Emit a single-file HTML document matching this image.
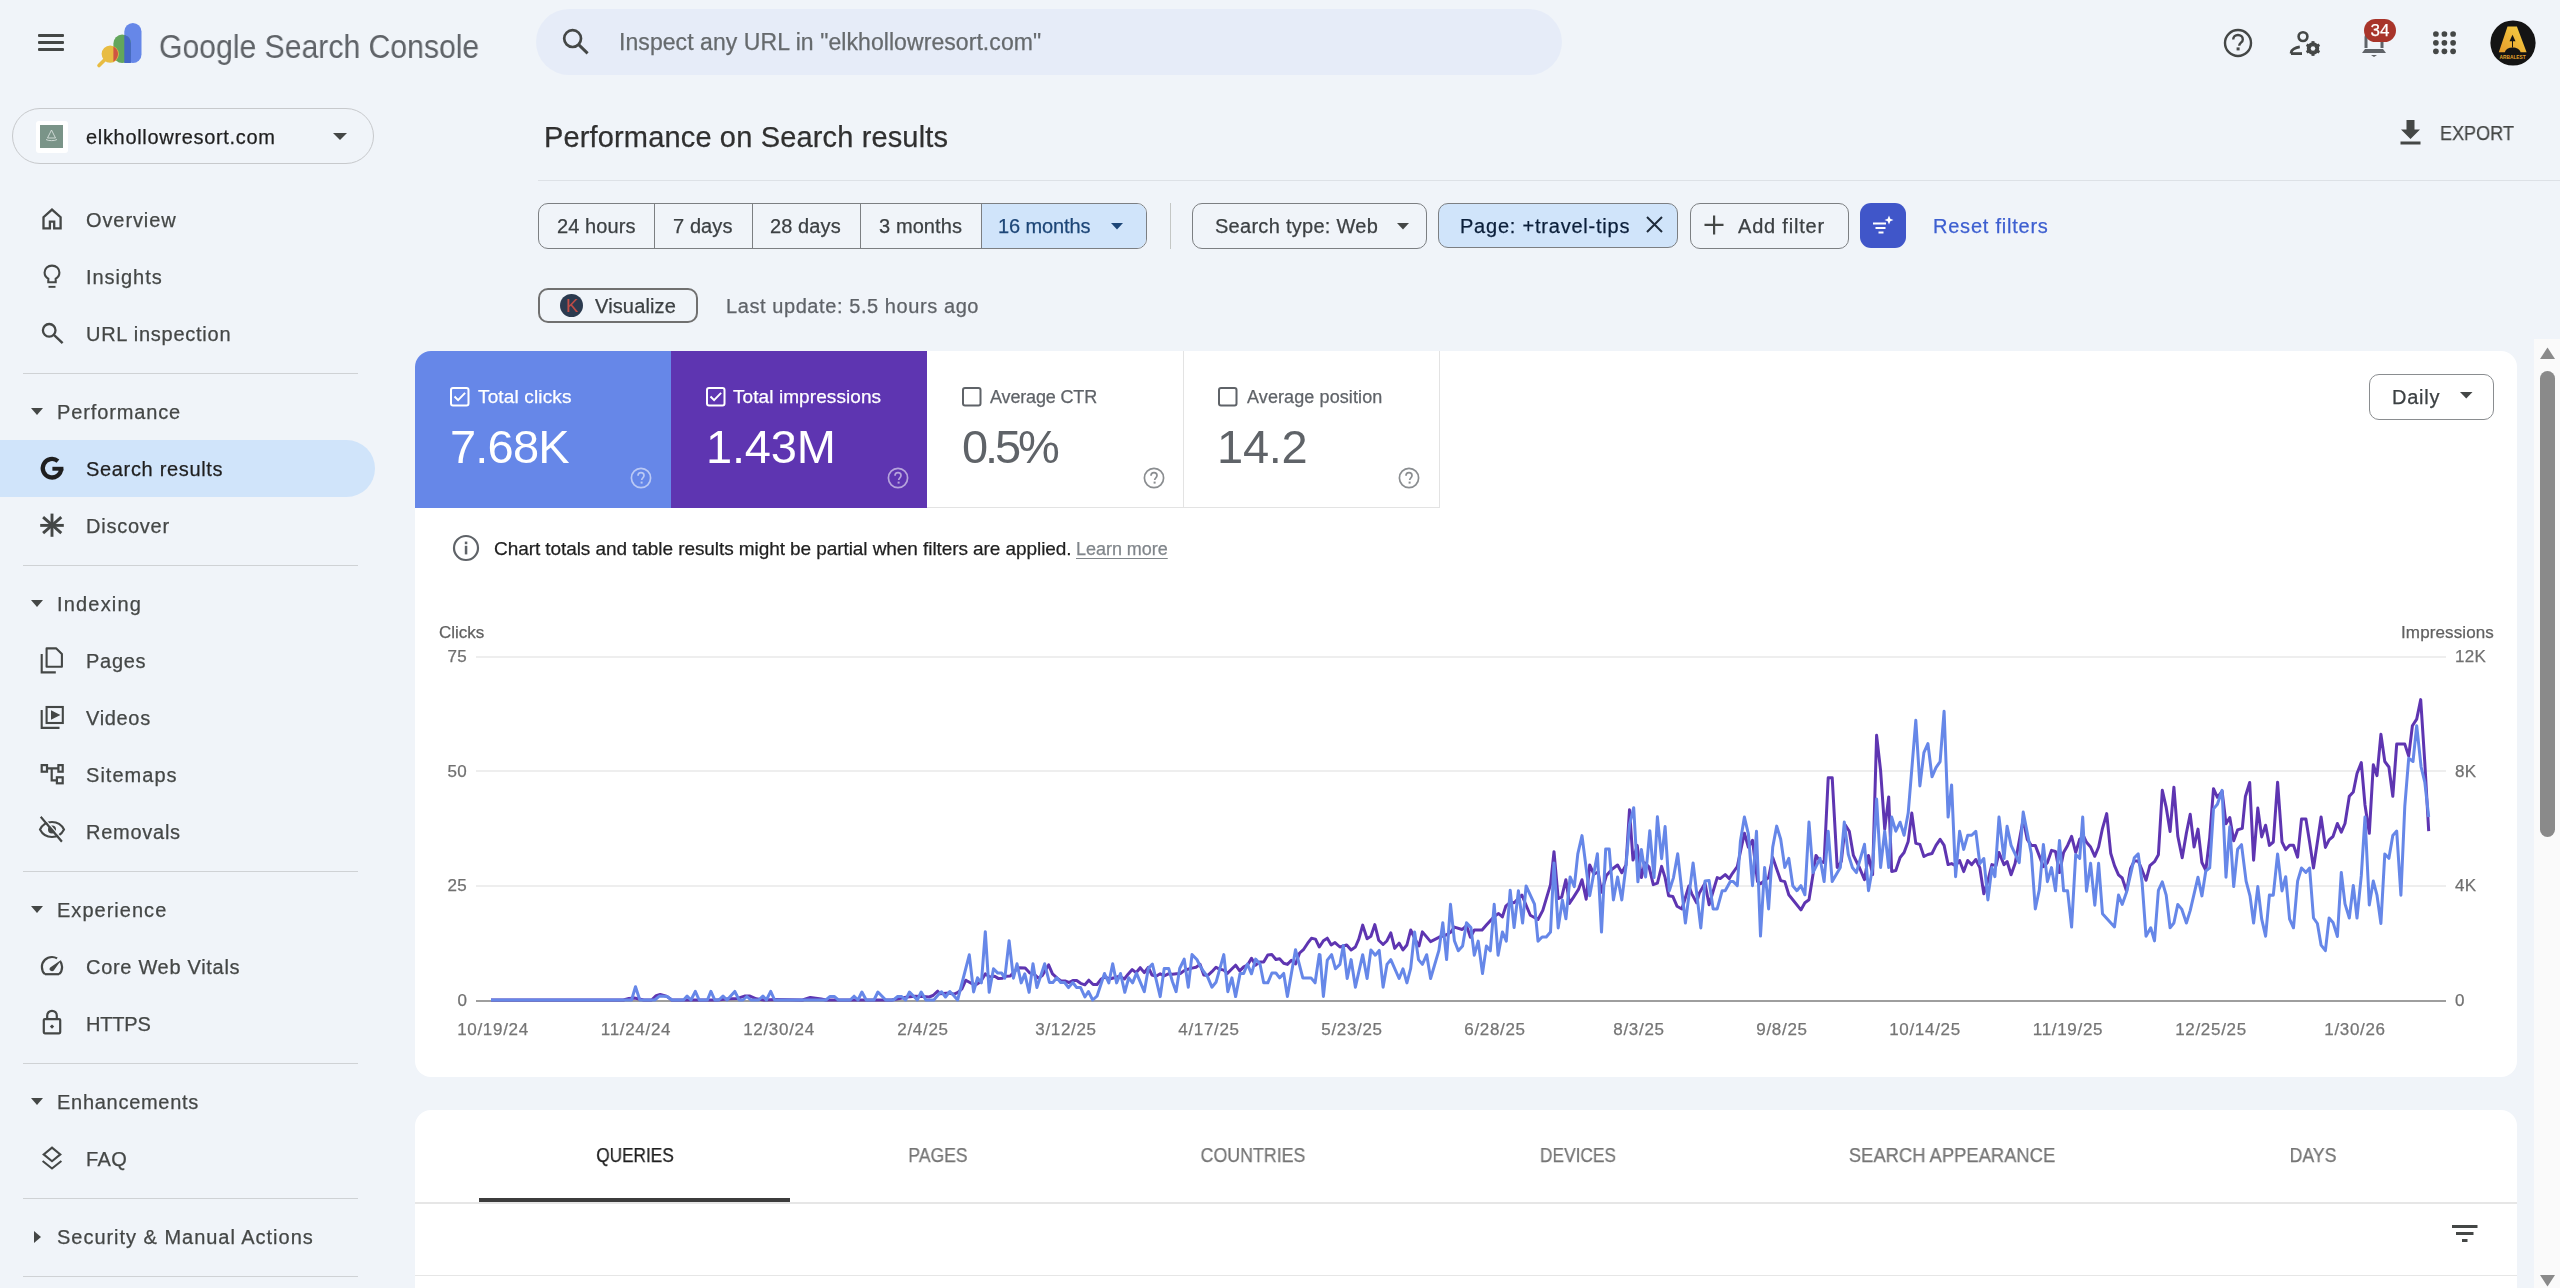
<!DOCTYPE html>
<html><head><meta charset="utf-8"><title>Performance on Search results</title>
<style>
html,body{margin:0;padding:0;}
body{width:2560px;height:1288px;overflow:hidden;position:relative;background:#f0f4f9;font-family:"Liberation Sans",sans-serif;}
.t{position:absolute;white-space:nowrap;line-height:1;-webkit-font-smoothing:antialiased;will-change:transform;-webkit-text-stroke:0.25px currentColor;}
svg{display:block}
</style></head><body>
<div style="position:absolute;left:38px;top:34px;width:26px;height:3px;background:#444746;border-radius:1px"></div>
<div style="position:absolute;left:38px;top:41px;width:26px;height:3px;background:#444746;border-radius:1px"></div>
<div style="position:absolute;left:38px;top:48px;width:26px;height:3px;background:#444746;border-radius:1px"></div>
<svg style="position:absolute;left:95px;top:20px;" width="50" height="50" viewBox="0 0 50 50">
<rect x="29.3" y="2.9" width="17.2" height="40.1" rx="8.6" fill="#6687e8"/>
<rect x="18.4" y="14.6" width="17.6" height="28.4" rx="8.8" fill="#63a65c"/>
<path d="M29.3 14.9 A8.8 8.8 0 0 1 35.9 23.4 V43 H29.3 Z" fill="#4466c8"/>
<circle cx="15.2" cy="34.1" r="8.6" fill="#e8bc42"/>
<path d="M18.4 26.5 A8.6 8.6 0 0 1 18.4 41.7 Z" fill="#cf5442"/>
<line x1="4" y1="45.5" x2="10" y2="39.5" stroke="#e8bc42" stroke-width="3.6" stroke-linecap="round"/>
</svg>
<div class="t" style="left:159px;top:28.7px;font-size:34px;color:#5f6368;letter-spacing:0px;font-weight:400;transform:scaleX(0.8870);transform-origin:0 0;-webkit-text-stroke:0;">Google Search Console</div>
<div style="position:absolute;left:536px;top:9px;width:1026px;height:66px;background:#e6ecf8;border-radius:33px"></div>
<svg style="position:absolute;left:560px;top:27px;" width="30" height="30" viewBox="0 0 30 30"><circle cx="12.6" cy="11.6" r="8.4" fill="none" stroke="#444746" stroke-width="2.7"/><line x1="18.4" y1="17.4" x2="27.6" y2="26.4" stroke="#444746" stroke-width="2.9"/></svg>
<div class="t" style="left:618.5px;top:31.3px;font-size:23px;color:#666a6d;letter-spacing:0.07px;font-weight:400;">Inspect any URL in "elkhollowresort.com"</div>
<svg style="position:absolute;left:2222px;top:27px;" width="32" height="32" viewBox="0 0 32 32"><circle cx="16" cy="16" r="13" fill="none" stroke="#444746" stroke-width="2.4"/><path d="M11.2 12.6c0-2.8 2.1-4.6 4.8-4.6s4.8 1.8 4.8 4.4c0 3.3-3.6 3.3-3.6 6.4" fill="none" stroke="#444746" stroke-width="2.4"/><rect x="14.6" y="20.4" width="3" height="3" fill="#444746"/></svg>
<svg style="position:absolute;left:2288px;top:27px;" width="36" height="34" viewBox="0 0 36 34"><circle cx="15" cy="9.6" r="4.4" fill="none" stroke="#444746" stroke-width="2.6"/><path d="M3.2 26.6v-1.2c0-2.6 4.2-5 8.6-5.6" fill="none" stroke="#444746" stroke-width="2.8"/><line x1="3" y1="26.6" x2="14" y2="26.6" stroke="#444746" stroke-width="2.8"/><g transform="translate(25,21.5)"><circle r="4.6" fill="none" stroke="#444746" stroke-width="3.2"/><g stroke="#444746" stroke-width="3"><line x1="0" y1="-7.4" x2="0" y2="7.4"/><line x1="-6.4" y1="-3.7" x2="6.4" y2="3.7"/><line x1="-6.4" y1="3.7" x2="6.4" y2="-3.7"/></g><circle r="2.2" fill="#f0f4f9"/></g></svg>
<svg style="position:absolute;left:2358px;top:22px;" width="32" height="38" viewBox="0 0 32 38"><path d="M8 26V15c0-4.6 3.5-8 8-8s8 3.4 8 8v11" fill="none" stroke="#5f6368" stroke-width="3"/><path d="M4 31h24l-3-4H7z" fill="#5f6368"/><path d="M13 33h6l-3 2z" fill="#5f6368"/></svg>
<div style="position:absolute;left:2364px;top:18.5px;width:32px;height:23.5px;background:#a8342a;border-radius:12px"></div>
<div class="t" style="left:2360.0px;width:40px;text-align:center;top:22.1px;font-size:17px;color:#ffffff;letter-spacing:0px;font-weight:400;">34</div>
<svg style="position:absolute;left:2430px;top:28px;" width="30" height="30" viewBox="0 0 30 30"><circle cx="5.9" cy="6" r="2.85" fill="#444746"/><circle cx="5.9" cy="14.8" r="2.85" fill="#444746"/><circle cx="5.9" cy="23.3" r="2.85" fill="#444746"/><circle cx="14.4" cy="6" r="2.85" fill="#444746"/><circle cx="14.4" cy="14.8" r="2.85" fill="#444746"/><circle cx="14.4" cy="23.3" r="2.85" fill="#444746"/><circle cx="23.1" cy="6" r="2.85" fill="#444746"/><circle cx="23.1" cy="14.8" r="2.85" fill="#444746"/><circle cx="23.1" cy="23.3" r="2.85" fill="#444746"/></svg>
<svg style="position:absolute;left:2490px;top:20px;" width="46" height="46" viewBox="0 0 46 46"><circle cx="23" cy="23" r="22.6" fill="#141414"/>
<defs><linearGradient id="ag" x1="0" y1="1" x2="1" y2="0"><stop offset="0" stop-color="#e59a2a"/><stop offset="1" stop-color="#f6d245"/></linearGradient></defs>
<path d="M17.5 6.6h9.4l9.7 25.6h-6c-0.8-3-3.8-4.8-8-4.8s-7 1.8-7.8 4.8H8.8z" fill="url(#ag)"/>
<path d="M22.5 14.8l-3 6.5h6z" fill="#141414"/><rect x="22" y="20" width="1" height="7.5" fill="#141414"/>
<text x="22.6" y="39.2" font-family="Liberation Sans" font-weight="700" font-size="5.6" fill="#e6a52c" text-anchor="middle" textLength="26" lengthAdjust="spacingAndGlyphs">ARBALEST</text></svg>
<div style="position:absolute;left:12px;top:108px;width:362px;height:56px;border:1px solid #c7c9cc;border-radius:29px;box-sizing:border-box"></div>
<div style="position:absolute;left:35.5px;top:120.5px;width:32px;height:32px;background:#fff;border-radius:3px"></div>
<div style="position:absolute;left:40px;top:125px;width:23px;height:23px;background:#7a9488"></div>
<svg style="position:absolute;left:40px;top:125px;" width="23" height="23" viewBox="0 0 23 23"><path d="M11.5 5l-4 8h8z" fill="none" stroke="#d7e0dc" stroke-width="0.9"/><path d="M6 14.5c2 1.5 9 1.5 11 0" fill="none" stroke="#d7e0dc" stroke-width="0.9"/></svg>
<div class="t" style="left:85.5px;top:127.1px;font-size:20px;color:#1f1f1f;letter-spacing:0.68px;font-weight:400;">elkhollowresort.com</div>
<svg style="position:absolute;left:333px;top:133px;" width="15" height="8" viewBox="0 0 15 8"><path d="M0 0h14l-7 7z" fill="#444746"/></svg>
<div style="position:absolute;left:0px;top:440px;width:375px;height:57px;background:#d0e4fa;border-radius:0 28.5px 28.5px 0"></div>
<svg style="position:absolute;left:39.5px;top:203.2px;overflow:visible" width="24" height="30" viewBox="0 -3 24 30"><path d="M3.5 22.4V11.2L12 3.6l8.6 7.6v11.2H14.2V15.6H9.9v6.8z" fill="none" stroke="#444746" stroke-width="2.3" stroke-linejoin="miter"/></svg>
<div class="t" style="left:85.5px;top:209.8px;font-size:20px;color:#444746;letter-spacing:0.907px;font-weight:400;">Overview</div>
<svg style="position:absolute;left:39.5px;top:260.2px;overflow:visible" width="24" height="30" viewBox="0 -3 24 30"><path d="M8.3 19.3v-3.6C5.9 14.5 4.6 12.3 4.6 9.6 4.6 5.5 7.9 2.6 12 2.6s7.4 2.9 7.4 7c0 2.7-1.3 4.9-3.7 6.1v3.6z" fill="none" stroke="#444746" stroke-width="2.1"/><rect x="8.5" y="22.9" width="7" height="1.9" fill="#444746"/></svg>
<div class="t" style="left:85.5px;top:266.8px;font-size:20px;color:#444746;letter-spacing:0.964px;font-weight:400;">Insights</div>
<svg style="position:absolute;left:39.5px;top:317.0px;overflow:visible" width="24" height="30" viewBox="0 -3 24 30"><circle cx="9.2" cy="10.3" r="6.3" fill="none" stroke="#444746" stroke-width="2.3"/><line x1="13.6" y1="14.7" x2="22.6" y2="23.2" stroke="#444746" stroke-width="2.4"/></svg>
<div class="t" style="left:85.5px;top:323.6px;font-size:20px;color:#444746;letter-spacing:0.742px;font-weight:400;">URL inspection</div>
<div style="position:absolute;left:23px;top:373.2px;width:335px;height:1.3px;background:#cfd2d5"></div>
<svg style="position:absolute;left:31px;top:408.3px;" width="12" height="7" viewBox="0 0 12 7"><path d="M0 0h12l-6 7z" fill="#444746"/></svg>
<div class="t" style="left:57px;top:401.9px;font-size:20px;color:#444746;letter-spacing:0.87px;font-weight:400;">Performance</div>
<svg style="position:absolute;left:39.5px;top:452.0px;overflow:visible" width="24" height="30" viewBox="0 -3 24 30"><path d="M17.95 6.1A9.25 9.25 0 1 0 21.25 13.7" fill="none" stroke="#1f1f1f" stroke-width="4.3"/><rect x="12.4" y="11.8" width="11" height="3.9" fill="#1f1f1f"/></svg>
<div class="t" style="left:85.5px;top:458.6px;font-size:20px;color:#1f1f1f;letter-spacing:0.673px;font-weight:400;">Search results</div>
<svg style="position:absolute;left:39.5px;top:509.0px;overflow:visible" width="24" height="30" viewBox="0 -3 24 30"><g stroke="#444746" stroke-width="2.9"><line x1="12" y1="1.6" x2="12" y2="24.8"/><line x1="0.2" y1="13.4" x2="23.8" y2="13.4"/><line x1="3.1" y1="5.1" x2="21.3" y2="21.2"/><line x1="21.3" y1="5.1" x2="3.1" y2="21.2"/></g></svg>
<div class="t" style="left:85.5px;top:515.6px;font-size:20px;color:#444746;letter-spacing:0.764px;font-weight:400;">Discover</div>
<div style="position:absolute;left:23px;top:565.2px;width:335px;height:1.3px;background:#cfd2d5"></div>
<svg style="position:absolute;left:31px;top:600.0px;" width="12" height="7" viewBox="0 0 12 7"><path d="M0 0h12l-6 7z" fill="#444746"/></svg>
<div class="t" style="left:57px;top:593.6px;font-size:20px;color:#444746;letter-spacing:1.186px;font-weight:400;">Indexing</div>
<svg style="position:absolute;left:39.5px;top:644.0px;overflow:visible" width="24" height="30" viewBox="0 -3 24 30"><path d="M1.7 6.9V25.4H15.8" fill="none" stroke="#444746" stroke-width="2.1"/><path d="M6.6 1.4H16.3L21.9 7V19.7H6.6z" fill="none" stroke="#444746" stroke-width="2.1" stroke-linejoin="round"/></svg>
<div class="t" style="left:85.5px;top:650.6px;font-size:20px;color:#444746;letter-spacing:0.725px;font-weight:400;">Pages</div>
<svg style="position:absolute;left:39.5px;top:701.0px;overflow:visible" width="24" height="30" viewBox="0 -3 24 30"><path d="M1.7 6V23.9H19.5" fill="none" stroke="#444746" stroke-width="2.1"/><rect x="6.6" y="3" width="16.2" height="16" fill="none" stroke="#444746" stroke-width="2.1"/><path d="M11 6.2L20.4 11 11 15.8z" fill="#444746"/></svg>
<div class="t" style="left:85.5px;top:707.6px;font-size:20px;color:#444746;letter-spacing:0.67px;font-weight:400;">Videos</div>
<svg style="position:absolute;left:39.5px;top:758.0px;overflow:visible" width="24" height="30" viewBox="0 -3 24 30"><g fill="none" stroke="#444746" stroke-width="2.2"><rect x="1.7" y="4.1" width="5.3" height="6.6"/><rect x="18.4" y="4.1" width="4.3" height="6.6"/><rect x="16.9" y="16.3" width="5.8" height="6"/><path d="M7 7.4h11.4M11.7 7.4v11.9h5.2"/></g></svg>
<div class="t" style="left:85.5px;top:764.6px;font-size:20px;color:#444746;letter-spacing:1.036px;font-weight:400;">Sitemaps</div>
<svg style="position:absolute;left:39.5px;top:815.0px;overflow:visible" width="24" height="30" viewBox="0 -3 24 30"><path d="M0 11.5C2.4 6.8 6.8 4 12 4s9.6 2.8 12 7.5c-2.4 4.7-6.8 7.5-12 7.5S2.4 16.2 0 11.5z" fill="none" stroke="#444746" stroke-width="2.1"/><circle cx="12" cy="11.5" r="4" fill="#444746"/><line x1="0.8" y1="-1.2" x2="22" y2="23.6" stroke="#444746" stroke-width="2.4"/><line x1="2.3" y1="-2.2" x2="23.5" y2="22.6" stroke="#f0f4f9" stroke-width="1.2"/></svg>
<div class="t" style="left:85.5px;top:821.6px;font-size:20px;color:#444746;letter-spacing:0.736px;font-weight:400;">Removals</div>
<div style="position:absolute;left:23px;top:871.2px;width:335px;height:1.3px;background:#cfd2d5"></div>
<svg style="position:absolute;left:31px;top:906.0px;" width="12" height="7" viewBox="0 0 12 7"><path d="M0 0h12l-6 7z" fill="#444746"/></svg>
<div class="t" style="left:57px;top:899.6px;font-size:20px;color:#444746;letter-spacing:1.022px;font-weight:400;">Experience</div>
<svg style="position:absolute;left:39.5px;top:950.0px;overflow:visible" width="24" height="30" viewBox="0 -3 24 30"><path d="M5 21.2C2.9 19.3 1.9 16.8 1.9 13.9 1.9 8.4 6.4 4 12 4c1.9 0 3.6.5 5.1 1.4M20.1 8.2c1.3 1.6 2 3.6 2 5.7 0 2.9-1 5.4-3.1 7.3" fill="none" stroke="#444746" stroke-width="2.2"/><path d="M10.3 17.6c-1-.9-1-2.3-.1-3.2l11.2-7.6-7.6 10.8c-.9.9-2.5.9-3.5 0z" fill="#444746"/><line x1="5" y1="21.2" x2="19" y2="21.2" stroke="#444746" stroke-width="2.2"/></svg>
<div class="t" style="left:85.5px;top:956.6px;font-size:20px;color:#444746;letter-spacing:0.7px;font-weight:400;">Core Web Vitals</div>
<svg style="position:absolute;left:39.5px;top:1007.0px;overflow:visible" width="24" height="30" viewBox="0 -3 24 30"><path d="M7.2 8.4V5.6C7.2 2.8 9.3.8 12 .8s4.8 2 4.8 4.8v2.8" fill="none" stroke="#444746" stroke-width="2.2"/><rect x="3.8" y="9.1" width="16.4" height="14.2" rx="1" fill="none" stroke="#444746" stroke-width="2.2"/><path d="M12 14.4l2.2 2.2L12 18.8 9.8 16.6z" fill="#444746"/></svg>
<div class="t" style="left:85.5px;top:1013.6px;font-size:20px;color:#444746;letter-spacing:-0.2px;font-weight:400;">HTTPS</div>
<div style="position:absolute;left:23px;top:1063.2px;width:335px;height:1.3px;background:#cfd2d5"></div>
<svg style="position:absolute;left:31px;top:1098.0px;" width="12" height="7" viewBox="0 0 12 7"><path d="M0 0h12l-6 7z" fill="#444746"/></svg>
<div class="t" style="left:57px;top:1091.6px;font-size:20px;color:#444746;letter-spacing:0.718px;font-weight:400;">Enhancements</div>
<svg style="position:absolute;left:39.5px;top:1142.0px;overflow:visible" width="24" height="30" viewBox="0 -3 24 30"><path d="M12 2.6l8.3 6.8L12 16.2 3.7 9.4z" fill="none" stroke="#444746" stroke-width="2.1" stroke-linejoin="miter"/><path d="M2.6 16l9.4 7.5 9.4-7.5" fill="none" stroke="#444746" stroke-width="2.1"/></svg>
<div class="t" style="left:85.5px;top:1148.6px;font-size:20px;color:#444746;letter-spacing:0.4px;font-weight:400;">FAQ</div>
<div style="position:absolute;left:23px;top:1198.2px;width:335px;height:1.3px;background:#cfd2d5"></div>
<svg style="position:absolute;left:34px;top:1230.5px;" width="7" height="12" viewBox="0 0 7 12"><path d="M0 0v12l7-6z" fill="#444746"/></svg>
<div class="t" style="left:57px;top:1226.6px;font-size:20px;color:#444746;letter-spacing:0.975px;font-weight:400;">Security &amp; Manual Actions</div>
<div style="position:absolute;left:23px;top:1276.2px;width:335px;height:1.3px;background:#cfd2d5"></div>
<div class="t" style="left:544px;top:122.5px;font-size:29px;color:#303030;letter-spacing:0.15px;font-weight:400;">Performance on Search results</div>
<div style="position:absolute;left:538px;top:179.5px;width:2022px;height:1.5px;background:#dde1e6"></div>
<svg style="position:absolute;left:2400px;top:120px;" width="21" height="25" viewBox="0 0 21 25"><path d="M6.5 0h8v9.5h5.5L10.5 19 1 9.5h5.5z" fill="#444746"/><rect x="0.5" y="21.5" width="20" height="3" fill="#444746"/></svg>
<div class="t" style="left:2440px;top:123.2px;font-size:20.5px;color:#444746;letter-spacing:0px;font-weight:400;transform:scaleX(0.8800);transform-origin:0 0;">EXPORT</div>
<div style="position:absolute;left:538px;top:203px;width:609px;height:46px;border:1px solid #7c7f82;border-radius:10px;box-sizing:border-box;overflow:hidden"></div>
<div style="position:absolute;left:982px;top:204px;width:164px;height:44px;background:#d0e4fa;border-radius:0 9px 9px 0"></div>
<div style="position:absolute;left:654.0px;top:204px;width:1px;height:44px;background:#7c7f82"></div>
<div style="position:absolute;left:751.5px;top:204px;width:1px;height:44px;background:#7c7f82"></div>
<div style="position:absolute;left:859.5px;top:204px;width:1px;height:44px;background:#7c7f82"></div>
<div style="position:absolute;left:981.0px;top:204px;width:1px;height:44px;background:#7c7f82"></div>
<div class="t" style="left:556.5px;top:215.9px;font-size:20px;color:#3c4043;letter-spacing:0.1px;font-weight:400;">24 hours</div>
<div class="t" style="left:672.5px;top:215.9px;font-size:20px;color:#3c4043;letter-spacing:0.1px;font-weight:400;">7 days</div>
<div class="t" style="left:770px;top:215.9px;font-size:20px;color:#3c4043;letter-spacing:0.1px;font-weight:400;">28 days</div>
<div class="t" style="left:878.5px;top:215.9px;font-size:20px;color:#3c4043;letter-spacing:0.1px;font-weight:400;">3 months</div>
<div class="t" style="left:998px;top:215.9px;font-size:20px;color:#1d4677;letter-spacing:-0.1px;font-weight:400;">16 months</div>
<svg style="position:absolute;left:1111px;top:223px;" width="12" height="7" viewBox="0 0 12 7"><path d="M0 0h12l-6 6.5z" fill="#1d4677"/></svg>
<div style="position:absolute;left:1169.5px;top:203px;width:1.5px;height:46px;background:#c4c7c5"></div>
<div style="position:absolute;left:1192px;top:203px;width:235px;height:46px;border:1px solid #7c7f82;border-radius:10px;box-sizing:border-box"></div>
<div class="t" style="left:1214.5px;top:215.9px;font-size:20px;color:#3c4043;letter-spacing:0.28px;font-weight:400;">Search type: Web</div>
<svg style="position:absolute;left:1397px;top:222.5px;" width="12" height="7" viewBox="0 0 12 7"><path d="M0 0h12l-6 6.5z" fill="#444746"/></svg>
<div style="position:absolute;left:1438px;top:203px;width:240px;height:45px;background:#d0e4fa;border:1px solid #7c7f82;border-radius:10px;box-sizing:border-box"></div>
<div class="t" style="left:1459.5px;top:215.9px;font-size:20px;color:#0b1f3a;letter-spacing:0.78px;font-weight:400;">Page: +travel-tips</div>
<svg style="position:absolute;left:1646px;top:216px;" width="17" height="17" viewBox="0 0 17 17"><path d="M1 1L16 16M16 1L1 16" stroke="#1f2b3a" stroke-width="2"/></svg>
<div style="position:absolute;left:1690px;top:203px;width:159px;height:46px;border:1px solid #7c7f82;border-radius:10px;box-sizing:border-box"></div>
<svg style="position:absolute;left:1704px;top:215px;" width="20" height="20" viewBox="0 0 20 20"><path d="M9 0.5h2.2v8.3h8.3V11h-8.3v8.5H9V11H0.5V8.8H9z" fill="#444746"/></svg>
<div class="t" style="left:1738px;top:215.9px;font-size:20px;color:#3c4043;letter-spacing:0.8px;font-weight:400;">Add filter</div>
<div style="position:absolute;left:1860px;top:203px;width:45.5px;height:45px;background:#4056c9;border-radius:11px"></div>
<svg style="position:absolute;left:1872px;top:214px;" width="24" height="22" viewBox="0 0 24 22"><rect x="1" y="8.5" width="13" height="2" fill="#fff"/><rect x="3.5" y="13" width="10" height="2" fill="#fff"/><rect x="6.5" y="17.5" width="5" height="2" fill="#fff"/><path d="M17 1.5l1.3 3.2 3.2 1.3-3.2 1.3L17 10.5l-1.3-3.2-3.2-1.3 3.2-1.3z" fill="#fff"/></svg>
<div class="t" style="left:1932.8px;top:215.9px;font-size:20px;color:#3d5fd0;letter-spacing:0.77px;font-weight:400;">Reset filters</div>
<div style="position:absolute;left:538px;top:287.5px;width:159.5px;height:35.5px;border:2px solid #707070;border-radius:10px;box-sizing:border-box"></div>
<div style="position:absolute;left:559.5px;top:294px;width:23px;height:23px;background:#2b3a4f;border-radius:50%"></div>
<div class="t" style="left:565.5px;top:297.1px;font-size:18.5px;color:#bf4d47;letter-spacing:0px;font-weight:400;-webkit-text-stroke:0.1px currentColor;">K</div>
<div class="t" style="left:594.5px;top:295.9px;font-size:20px;color:#3c4043;letter-spacing:0.15px;font-weight:400;">Visualize</div>
<div class="t" style="left:725.5px;top:295.9px;font-size:20px;color:#5f6368;letter-spacing:0.58px;font-weight:400;">Last update: 5.5 hours ago</div>
<div style="position:absolute;left:415px;top:351px;width:2102px;height:725.5px;background:#fff;border-radius:16px"></div>
<div style="position:absolute;left:415px;top:351px;width:256.2px;height:157px;background:#6687e8;border-radius:16px 0 0 0"></div>
<div style="position:absolute;left:671.2px;top:351px;width:256px;height:157px;background:#5e35b1"></div>
<div style="position:absolute;left:927.2px;top:507px;width:512px;height:1px;background:#e3e3e3"></div>
<div style="position:absolute;left:1182.5px;top:351px;width:1px;height:157px;background:#e3e3e3"></div>
<div style="position:absolute;left:1439px;top:351px;width:1px;height:157px;background:#e3e3e3"></div>
<svg style="position:absolute;left:450px;top:386.5px;" width="20" height="20" viewBox="0 0 20 20"><rect x="1" y="1" width="17.5" height="17.5" rx="2" fill="none" stroke="#fff" stroke-width="2"/><path d="M4.5 9.5l3.6 3.6 7-7.2" fill="none" stroke="#fff" stroke-width="2"/></svg>
<div class="t" style="left:477.5px;top:386.8px;font-size:19px;color:#fff;letter-spacing:0.15px;font-weight:400;">Total clicks</div>
<div class="t" style="left:449.5px;top:423.4px;font-size:47px;color:#fff;letter-spacing:-0.8px;font-weight:400;-webkit-text-stroke:0;">7.68K</div>
<svg style="position:absolute;left:630.4px;top:466.6px;" width="22" height="22" viewBox="0 0 22 22"><circle cx="11" cy="11" r="9.6" fill="none" stroke="rgba(255,255,255,0.55)" stroke-width="1.7"/><path d="M8 8.8c0-1.9 1.4-3.1 3-3.1s3 1.2 3 2.9c0 2.2-2.3 2.2-2.3 4.4" fill="none" stroke="rgba(255,255,255,0.55)" stroke-width="1.7"/><rect x="10.6" y="14.6" width="2" height="2" fill="rgba(255,255,255,0.55)"/></svg>
<svg style="position:absolute;left:706px;top:386.5px;" width="20" height="20" viewBox="0 0 20 20"><rect x="1" y="1" width="17.5" height="17.5" rx="2" fill="none" stroke="#fff" stroke-width="2"/><path d="M4.5 9.5l3.6 3.6 7-7.2" fill="none" stroke="#fff" stroke-width="2"/></svg>
<div class="t" style="left:733px;top:386.8px;font-size:19px;color:#fff;letter-spacing:0.08px;font-weight:400;">Total impressions</div>
<div class="t" style="left:705.5px;top:423.4px;font-size:47px;color:#fff;letter-spacing:-0.2px;font-weight:400;-webkit-text-stroke:0;">1.43M</div>
<svg style="position:absolute;left:886.7px;top:466.6px;" width="22" height="22" viewBox="0 0 22 22"><circle cx="11" cy="11" r="9.6" fill="none" stroke="rgba(255,255,255,0.55)" stroke-width="1.7"/><path d="M8 8.8c0-1.9 1.4-3.1 3-3.1s3 1.2 3 2.9c0 2.2-2.3 2.2-2.3 4.4" fill="none" stroke="rgba(255,255,255,0.55)" stroke-width="1.7"/><rect x="10.6" y="14.6" width="2" height="2" fill="rgba(255,255,255,0.55)"/></svg>
<svg style="position:absolute;left:961.5px;top:386.5px;" width="20" height="20" viewBox="0 0 20 20"><rect x="1" y="1" width="17.5" height="17.5" rx="2" fill="none" stroke="#5f6368" stroke-width="2"/></svg>
<div class="t" style="left:989.5px;top:387.7px;font-size:18px;color:#5f6368;letter-spacing:-0.15px;font-weight:400;">Average CTR</div>
<div class="t" style="left:962px;top:423.4px;font-size:47px;color:#5f6368;letter-spacing:-3.1px;font-weight:400;-webkit-text-stroke:0;">0.5%</div>
<svg style="position:absolute;left:1142.6px;top:466.6px;" width="22" height="22" viewBox="0 0 22 22"><circle cx="11" cy="11" r="9.6" fill="none" stroke="#8a8d90" stroke-width="1.7"/><path d="M8 8.8c0-1.9 1.4-3.1 3-3.1s3 1.2 3 2.9c0 2.2-2.3 2.2-2.3 4.4" fill="none" stroke="#8a8d90" stroke-width="1.7"/><rect x="10.6" y="14.6" width="2" height="2" fill="#8a8d90"/></svg>
<svg style="position:absolute;left:1218px;top:386.5px;" width="20" height="20" viewBox="0 0 20 20"><rect x="1" y="1" width="17.5" height="17.5" rx="2" fill="none" stroke="#5f6368" stroke-width="2"/></svg>
<div class="t" style="left:1246.5px;top:387.7px;font-size:18px;color:#5f6368;letter-spacing:0.1px;font-weight:400;">Average position</div>
<div class="t" style="left:1216.5px;top:423.4px;font-size:47px;color:#5f6368;letter-spacing:-0.25px;font-weight:400;-webkit-text-stroke:0;">14.2</div>
<svg style="position:absolute;left:1398px;top:466.6px;" width="22" height="22" viewBox="0 0 22 22"><circle cx="11" cy="11" r="9.6" fill="none" stroke="#8a8d90" stroke-width="1.7"/><path d="M8 8.8c0-1.9 1.4-3.1 3-3.1s3 1.2 3 2.9c0 2.2-2.3 2.2-2.3 4.4" fill="none" stroke="#8a8d90" stroke-width="1.7"/><rect x="10.6" y="14.6" width="2" height="2" fill="#8a8d90"/></svg>
<div style="position:absolute;left:2369px;top:373.5px;width:125px;height:46px;border:1px solid #8a8d90;border-radius:10px;box-sizing:border-box"></div>
<div class="t" style="left:2391.5px;top:386.6px;font-size:20px;color:#3c4043;letter-spacing:0.75px;font-weight:400;">Daily</div>
<svg style="position:absolute;left:2460px;top:392px;" width="13" height="7" viewBox="0 0 13 7"><path d="M0 0h12.5l-6.25 6.5z" fill="#444746"/></svg>
<svg style="position:absolute;left:452px;top:534px;" width="28" height="28" viewBox="0 0 28 28"><circle cx="14" cy="14" r="12" fill="none" stroke="#5f6368" stroke-width="2.2"/><rect x="12.8" y="7.6" width="2.5" height="2.6" fill="#5f6368"/><rect x="12.8" y="11.8" width="2.5" height="8.6" fill="#5f6368"/></svg>
<div class="t" style="left:493.5px;top:539.2px;font-size:19px;color:#1f1f1f;letter-spacing:-0.075px;font-weight:400;">Chart totals and table results might be partial when filters are applied.</div>
<div class="t" style="left:1076.3px;top:540.1px;font-size:18px;color:#80868b;letter-spacing:-0.03px;font-weight:400;text-decoration:underline;text-underline-offset:3px">Learn more</div>
<div class="t" style="left:438.5px;top:623.6px;font-size:17px;color:#616161;letter-spacing:0px;font-weight:400;">Clicks</div>
<div class="t" style="left:2194px;width:300px;text-align:right;top:624.1px;font-size:17px;color:#616161;letter-spacing:0.12px">Impressions</div>
<div style="position:absolute;left:476px;top:655.5px;width:1970px;height:2px;background:#eeeeee"></div>
<div class="t" style="left:407px;width:60px;text-align:right;top:648.1px;font-size:17px;color:#707070;letter-spacing:0.3px">75</div>
<div class="t" style="left:2455px;top:648.1px;font-size:17px;color:#707070;letter-spacing:0.3px;font-weight:400;">12K</div>
<div style="position:absolute;left:476px;top:770px;width:1970px;height:2px;background:#eeeeee"></div>
<div class="t" style="left:407px;width:60px;text-align:right;top:762.6px;font-size:17px;color:#707070;letter-spacing:0.3px">50</div>
<div class="t" style="left:2455px;top:762.6px;font-size:17px;color:#707070;letter-spacing:0.3px;font-weight:400;">8K</div>
<div style="position:absolute;left:476px;top:884.5px;width:1970px;height:2px;background:#eeeeee"></div>
<div class="t" style="left:407px;width:60px;text-align:right;top:877.1px;font-size:17px;color:#707070;letter-spacing:0.3px">25</div>
<div class="t" style="left:2455px;top:877.1px;font-size:17px;color:#707070;letter-spacing:0.3px;font-weight:400;">4K</div>
<div style="position:absolute;left:476px;top:999.5px;width:1970px;height:2.5px;background:#9e9e9e"></div>
<div class="t" style="left:407px;width:60px;text-align:right;top:991.6px;font-size:17px;color:#707070;letter-spacing:0px">0</div>
<div class="t" style="left:2455px;top:991.6px;font-size:17px;color:#707070;letter-spacing:0px;font-weight:400;">0</div>
<div class="t" style="left:423.0px;width:140px;text-align:center;top:1021.2px;font-size:17px;color:#757575;letter-spacing:0.68px;font-weight:400;">10/19/24</div>
<div class="t" style="left:566.2px;width:140px;text-align:center;top:1021.2px;font-size:17px;color:#757575;letter-spacing:0.68px;font-weight:400;">11/24/24</div>
<div class="t" style="left:709.4px;width:140px;text-align:center;top:1021.2px;font-size:17px;color:#757575;letter-spacing:0.68px;font-weight:400;">12/30/24</div>
<div class="t" style="left:852.5999999999999px;width:140px;text-align:center;top:1021.2px;font-size:17px;color:#757575;letter-spacing:0.68px;font-weight:400;">2/4/25</div>
<div class="t" style="left:995.8px;width:140px;text-align:center;top:1021.2px;font-size:17px;color:#757575;letter-spacing:0.68px;font-weight:400;">3/12/25</div>
<div class="t" style="left:1139.0px;width:140px;text-align:center;top:1021.2px;font-size:17px;color:#757575;letter-spacing:0.68px;font-weight:400;">4/17/25</div>
<div class="t" style="left:1282.1999999999998px;width:140px;text-align:center;top:1021.2px;font-size:17px;color:#757575;letter-spacing:0.68px;font-weight:400;">5/23/25</div>
<div class="t" style="left:1425.3999999999999px;width:140px;text-align:center;top:1021.2px;font-size:17px;color:#757575;letter-spacing:0.68px;font-weight:400;">6/28/25</div>
<div class="t" style="left:1568.6px;width:140px;text-align:center;top:1021.2px;font-size:17px;color:#757575;letter-spacing:0.68px;font-weight:400;">8/3/25</div>
<div class="t" style="left:1711.8px;width:140px;text-align:center;top:1021.2px;font-size:17px;color:#757575;letter-spacing:0.68px;font-weight:400;">9/8/25</div>
<div class="t" style="left:1855.0px;width:140px;text-align:center;top:1021.2px;font-size:17px;color:#757575;letter-spacing:0.68px;font-weight:400;">10/14/25</div>
<div class="t" style="left:1998.1999999999998px;width:140px;text-align:center;top:1021.2px;font-size:17px;color:#757575;letter-spacing:0.68px;font-weight:400;">11/19/25</div>
<div class="t" style="left:2141.3999999999996px;width:140px;text-align:center;top:1021.2px;font-size:17px;color:#757575;letter-spacing:0.68px;font-weight:400;">12/25/25</div>
<div class="t" style="left:2284.6px;width:140px;text-align:center;top:1021.2px;font-size:17px;color:#757575;letter-spacing:0.68px;font-weight:400;">1/30/26</div>
<svg style="position:absolute;left:0px;top:0px;pointer-events:none" width="2560" height="1288" viewBox="0 0 2560 1288"><polyline points="491.0,1000.0 600.0,1000.0 623.4,1000.0 628.9,998.4 634.4,998.0 643.8,1000.0 651.6,1000.0 656.2,995.7 660.2,994.5 666.4,996.1 671.9,1000.0 684.4,1000.0 697.7,1000.0 717.2,1000.0 728.9,998.8 737.5,998.4 744.5,996.1 750.0,996.1 756.2,998.8 764.1,1000.0 775.8,999.6 802.5,1000.0 810.3,997.4 821.2,999.0 825.9,1000.0 833.0,1000.0 852.5,1000.0 875.9,1000.0 891.6,1000.0 907.2,997.0 915.0,996.2 922.8,996.6 929.1,997.0 933.0,995.5 937.7,991.2 940.0,993.8 949.4,993.0 954.1,994.2 958.0,992.3 961.9,988.8 965.8,980.2 971.2,983.3 975.9,984.8 980.6,981.7 985.3,973.9 990.0,977.0 994.7,976.2 998.6,978.6 1002.5,978.2 1006.4,976.2 1010.3,975.9 1015.0,970.8 1019.7,967.7 1025.2,968.0 1029.8,973.1 1033.8,973.9 1038.4,978.2 1042.3,975.5 1048.6,964.9 1052.5,973.9 1057.2,978.2 1061.1,980.9 1065.0,980.9 1068.9,982.5 1072.8,980.5 1076.7,980.5 1080.6,983.3 1084.9,984.8 1088.8,980.2 1093.1,984.5 1097.0,984.5 1100.9,979.4 1104.8,977.0 1109.5,979.0 1114.2,977.8 1119.7,976.2 1124.4,979.0 1128.3,973.9 1132.2,969.6 1136.1,972.7 1140.2,967.7 1144.3,972.6 1148.3,967.3 1152.0,975.0 1156.1,976.2 1160.2,973.8 1164.2,975.8 1168.3,973.8 1172.4,974.2 1176.5,973.8 1180.6,973.4 1183.8,970.9 1187.9,969.3 1192.0,968.1 1196.0,967.3 1200.1,964.4 1203.8,975.0 1207.9,975.4 1211.9,971.7 1216.0,967.3 1220.1,969.3 1223.8,970.1 1227.4,973.4 1231.5,969.3 1235.6,965.2 1239.7,970.9 1243.7,966.9 1247.4,965.2 1251.5,958.3 1255.6,965.2 1259.6,962.0 1263.7,962.0 1267.8,955.0 1271.9,954.6 1275.9,959.5 1279.6,958.7 1283.7,963.2 1287.4,964.4 1291.4,960.3 1295.5,964.0 1299.6,953.0 1303.7,949.3 1307.7,943.2 1311.4,938.3 1315.5,939.1 1319.2,946.9 1320.0,946.0 1323.4,940.7 1327.3,938.2 1331.2,945.0 1335.0,942.6 1339.9,947.0 1346.7,945.0 1351.1,949.9 1355.4,947.0 1358.8,939.2 1362.7,925.1 1367.1,938.7 1370.9,936.3 1374.8,924.6 1378.7,940.2 1383.1,944.5 1387.0,940.7 1390.8,932.9 1394.7,948.4 1399.1,943.1 1403.0,949.9 1406.9,945.0 1410.7,930.0 1415.1,939.2 1419.0,946.0 1422.4,931.9 1430.6,941.6 1438.9,937.3 1446.6,934.8 1451.0,931.9 1454.4,927.1 1462.2,929.5 1466.5,925.6 1470.4,937.3 1474.3,930.0 1482.1,930.0 1486.4,925.1 1494.2,916.4 1498.6,913.5 1502.4,916.9 1505.8,906.2 1510.2,902.3 1514.1,902.8 1521.9,895.0 1530.3,915.3 1538.0,919.5 1542.8,910.4 1550.5,884.6 1554.0,851.7 1558.2,898.5 1561.7,897.1 1565.9,879.7 1569.4,903.4 1573.6,897.1 1578.5,889.4 1582.0,879.7 1586.2,899.2 1589.7,865.0 1593.9,874.1 1598.1,872.0 1601.5,892.2 1606.4,875.5 1612.0,869.2 1617.6,865.0 1621.8,872.7 1626.0,865.0 1629.5,809.8 1633.0,860.1 1637.2,845.4 1641.4,877.6 1644.9,862.9 1649.1,867.1 1653.3,884.6 1657.4,883.2 1661.6,866.4 1665.1,877.6 1668.6,895.7 1672.8,896.4 1677.0,906.2 1681.9,909.0 1688.9,886.0 1691.7,893.6 1696.6,902.7 1699.4,892.9 1705.0,883.2 1709.1,904.8 1717.2,877.6 1720.2,878.6 1725.2,874.6 1729.3,878.6 1732.3,873.6 1737.3,866.5 1744.4,833.2 1748.4,847.3 1752.5,840.3 1757.5,881.6 1760.5,883.7 1768.6,877.6 1772.7,857.4 1780.7,880.6 1784.8,881.6 1788.8,894.8 1800.9,909.9 1804.9,902.8 1809.0,899.8 1816.0,855.4 1820.1,861.5 1824.1,862.5 1828.2,777.7 1832.2,777.7 1837.2,867.5 1841.3,861.5 1845.3,825.1 1849.3,831.2 1853.4,855.4 1859.4,867.5 1864.5,879.6 1868.5,855.4 1872.6,874.6 1876.6,735.3 1880.6,770.6 1884.7,829.2 1888.7,796.9 1891.7,871.5 1895.8,870.5 1900.1,857.5 1904.1,852.5 1908.2,841.4 1911.8,813.1 1915.8,843.4 1919.9,844.4 1923.9,856.5 1927.9,854.5 1932.0,853.5 1936.0,845.4 1940.1,839.3 1944.1,845.4 1948.1,864.6 1951.6,863.6 1955.6,865.6 1959.6,860.5 1963.7,871.6 1967.7,860.5 1971.7,864.6 1975.8,859.5 1979.8,867.6 1983.8,893.8 1987.9,880.7 1991.9,864.6 1996.0,865.6 1999.0,852.5 2004.0,864.6 2007.1,861.5 2011.1,874.7 2015.1,863.6 2023.2,819.2 2027.2,839.3 2031.3,845.4 2035.3,845.4 2043.4,866.6 2047.4,862.6 2051.5,850.4 2055.5,851.5 2059.5,872.6 2063.6,852.5 2067.6,845.4 2071.6,836.3 2075.7,852.5 2079.7,839.3 2083.7,836.3 2086.5,842.3 2090.6,847.0 2094.8,856.3 2098.6,847.0 2102.5,828.3 2106.7,813.6 2110.7,853.2 2114.5,865.6 2118.5,874.9 2122.2,878.0 2126.6,891.2 2130.5,868.7 2134.3,860.9 2138.2,860.9 2142.1,870.2 2146.0,880.3 2149.9,865.6 2154.5,861.7 2158.4,854.7 2162.3,790.3 2166.2,807.4 2170.1,831.4 2173.9,787.2 2177.8,836.1 2182.2,857.8 2186.4,833.0 2190.2,814.3 2194.1,847.0 2198.0,829.1 2201.9,862.5 2205.8,870.2 2209.7,837.6 2213.5,788.7 2217.4,797.3 2222.1,791.1 2226.0,823.7 2229.8,817.5 2233.7,840.7 2237.6,829.9 2242.3,828.3 2245.4,796.5 2249.7,782.5 2253.6,860.2 2257.8,808.1 2261.7,836.9 2265.6,825.2 2269.4,845.4 2273.3,842.0 2277.6,782.2 2282.0,842.0 2285.7,849.6 2289.6,845.2 2293.5,845.2 2297.6,857.2 2301.5,819.1 2305.9,819.1 2309.6,842.0 2313.5,868.0 2317.4,842.0 2321.1,817.0 2325.4,847.4 2329.1,839.8 2333.0,836.5 2337.4,823.5 2341.3,832.2 2345.0,823.5 2349.3,796.3 2353.3,792.0 2357.0,773.5 2361.3,762.6 2365.0,805.0 2369.3,833.3 2373.3,764.8 2377.0,775.7 2380.9,734.3 2384.8,761.5 2388.9,767.0 2392.8,796.3 2396.7,744.1 2400.9,744.1 2404.8,744.1 2408.7,756.1 2412.4,725.7 2416.7,719.1 2420.7,699.6 2424.8,762.6 2428.7,831.1" fill="none" stroke="#5e35b1" stroke-width="3" stroke-linejoin="round"/><polyline points="491.0,1000.0 600.0,1000.0 623.4,1000.0 631.6,1000.0 635.5,986.7 639.8,1000.0 654.7,1000.0 659.4,996.1 667.2,996.5 671.9,1000.0 683.6,1000.0 687.1,996.1 691.0,1000.0 695.3,991.4 699.2,1000.0 707.4,1000.0 710.9,991.4 714.8,1000.0 718.8,1000.0 723.0,996.1 727.0,1000.0 734.8,991.4 739.1,1000.0 743.0,1000.0 746.9,996.5 750.8,1000.0 758.6,1000.0 762.9,996.1 766.4,1000.0 770.7,991.4 774.6,1000.0 825.9,1000.0 829.8,996.6 834.5,996.6 838.4,1000.0 850.2,1000.0 854.1,996.2 858.0,1000.0 861.9,992.0 866.2,1000.0 874.0,1000.0 877.9,992.0 885.7,1000.0 893.5,1000.0 897.4,996.6 901.7,996.6 905.6,1000.0 909.5,992.0 917.3,1000.0 921.2,992.0 925.9,1000.0 933.8,1000.0 940.0,992.7 941.6,991.9 945.5,997.0 949.8,991.5 953.3,995.0 957.6,1000.0 969.3,954.8 973.6,991.9 977.5,977.8 981.4,982.9 985.3,931.7 989.2,992.3 993.5,968.8 997.8,973.1 1001.7,973.1 1004.8,978.2 1009.1,940.7 1013.4,978.2 1017.0,963.8 1021.2,982.9 1024.8,973.9 1029.1,992.3 1033.0,963.8 1036.9,987.6 1044.7,963.8 1049.4,982.5 1052.9,982.5 1056.8,977.8 1060.7,982.5 1064.6,982.5 1068.5,987.6 1072.8,982.5 1076.7,987.6 1080.6,987.6 1084.9,997.0 1088.4,991.5 1092.7,1000.0 1097.0,996.2 1104.5,973.5 1108.8,982.9 1112.7,963.8 1116.6,982.9 1120.5,973.5 1124.8,992.3 1128.7,977.8 1132.6,982.9 1136.5,973.1 1144.3,991.7 1148.3,968.5 1152.4,964.0 1160.2,996.6 1164.2,968.5 1168.7,968.5 1172.4,981.5 1176.1,991.7 1179.7,968.5 1184.2,959.1 1188.3,987.2 1192.0,954.6 1196.9,959.5 1200.1,966.0 1203.8,971.7 1207.5,976.6 1211.9,987.2 1216.0,982.3 1223.8,954.6 1227.8,991.7 1231.9,977.9 1235.6,996.6 1240.1,973.4 1243.7,973.4 1247.4,964.0 1251.5,973.8 1255.6,959.1 1260.0,964.0 1263.7,982.8 1267.8,982.8 1271.9,973.0 1275.9,973.0 1279.6,977.9 1283.7,973.4 1287.4,996.6 1295.5,949.7 1302.8,977.9 1311.0,977.9 1315.1,982.8 1319.2,954.6 1320.0,954.7 1323.4,996.4 1327.3,960.1 1331.6,954.7 1335.5,968.8 1339.9,964.4 1343.3,945.5 1347.2,978.5 1351.1,959.6 1355.4,987.2 1362.7,954.7 1367.1,978.5 1370.9,949.9 1375.3,955.2 1379.2,950.4 1383.1,987.2 1387.0,964.4 1390.8,959.6 1399.1,978.5 1403.0,968.8 1406.9,982.9 1410.7,968.3 1414.6,931.9 1418.5,959.6 1422.4,964.4 1426.7,954.7 1430.6,978.5 1438.9,950.4 1442.8,922.7 1446.6,959.6 1450.5,904.3 1454.4,940.7 1458.3,950.8 1462.6,946.0 1466.5,922.7 1470.9,927.5 1474.3,955.2 1478.2,941.1 1482.5,973.6 1486.4,946.0 1490.3,950.8 1494.2,904.3 1498.1,955.2 1502.4,931.9 1506.3,941.1 1510.2,890.2 1514.1,927.5 1518.4,890.8 1522.6,923.0 1526.1,886.0 1534.5,904.1 1538.0,941.2 1542.1,937.0 1546.3,937.0 1550.5,932.1 1554.0,862.9 1558.2,927.9 1562.4,899.9 1565.9,918.8 1570.1,876.9 1574.3,886.7 1577.8,853.8 1582.0,835.6 1589.7,895.7 1597.4,853.8 1601.5,932.1 1605.7,848.9 1609.2,848.9 1613.4,899.9 1617.6,876.9 1621.8,899.9 1626.0,865.7 1629.5,824.5 1633.7,807.7 1637.9,881.8 1641.4,849.6 1645.6,876.9 1649.8,830.7 1654.0,877.6 1657.4,816.8 1661.6,858.7 1665.1,826.6 1669.3,890.8 1673.5,877.6 1677.7,853.8 1685.4,923.0 1693.1,862.9 1700.8,927.9 1705.0,881.1 1709.1,880.6 1713.1,908.9 1717.2,908.9 1722.2,890.7 1725.2,890.7 1730.3,881.6 1733.3,881.6 1737.3,885.7 1740.4,841.3 1744.4,817.1 1748.4,834.2 1752.5,885.7 1756.5,831.2 1760.5,936.1 1764.6,867.5 1768.6,908.9 1772.7,847.3 1776.7,826.1 1780.7,839.3 1784.8,867.5 1788.8,858.4 1792.8,885.7 1796.9,890.7 1800.9,885.7 1804.9,894.8 1809.0,822.1 1813.0,872.6 1820.1,858.4 1824.1,881.6 1828.2,831.2 1832.2,881.6 1840.3,867.5 1844.3,822.1 1848.3,854.4 1852.4,867.5 1856.4,872.6 1860.4,858.4 1864.5,844.3 1868.5,890.7 1872.6,867.5 1876.6,798.9 1880.6,867.5 1884.7,831.2 1888.7,867.5 1891.7,817.1 1895.8,831.2 1900.1,822.2 1904.1,835.3 1908.2,813.1 1915.8,720.3 1919.9,785.9 1923.9,752.6 1927.9,743.5 1932.0,776.8 1936.0,767.7 1940.1,761.6 1944.1,711.2 1948.1,817.1 1951.6,784.9 1955.6,876.7 1959.6,831.3 1963.7,849.4 1967.7,835.3 1971.7,835.3 1975.8,831.3 1979.8,863.6 1983.8,858.5 1987.9,899.9 1991.9,867.6 1994.9,876.7 1999.0,817.1 2004.0,858.5 2007.1,826.2 2011.1,845.4 2019.2,862.6 2023.2,812.1 2031.3,853.5 2035.3,909.0 2039.3,889.8 2043.4,844.4 2047.4,881.7 2051.5,867.6 2055.5,890.8 2059.5,840.4 2063.6,890.8 2067.6,890.8 2071.6,927.1 2075.7,854.5 2079.7,858.5 2082.7,817.1 2086.5,891.2 2090.6,863.3 2094.8,905.2 2098.6,863.3 2102.5,913.7 2114.5,926.9 2118.5,895.1 2122.2,904.4 2126.6,892.0 2134.3,857.8 2138.2,853.9 2142.1,882.7 2146.0,936.2 2150.7,927.7 2154.5,940.9 2158.4,890.4 2162.3,881.9 2166.2,895.1 2170.1,927.7 2173.9,923.0 2177.8,904.4 2181.7,909.1 2186.4,923.0 2190.2,910.6 2198.0,877.2 2201.9,895.9 2205.8,871.0 2209.7,867.9 2213.5,808.9 2217.4,804.3 2222.1,790.3 2226.0,877.2 2229.8,826.8 2233.7,886.6 2237.6,849.3 2241.5,844.6 2246.1,881.1 2250.0,895.9 2253.6,923.0 2257.8,886.6 2261.7,919.2 2265.6,936.2 2269.4,895.1 2273.3,895.2 2277.6,853.9 2282.0,890.9 2285.7,876.7 2289.6,919.1 2293.5,927.8 2297.6,881.1 2301.5,868.0 2305.9,872.4 2309.6,868.0 2313.5,918.0 2317.4,923.5 2321.1,945.2 2325.4,950.7 2329.1,918.0 2333.0,922.4 2337.4,936.5 2341.3,872.4 2345.0,903.9 2349.3,918.0 2353.3,885.4 2357.0,918.0 2361.3,875.7 2365.0,817.0 2369.3,905.0 2373.3,881.1 2377.0,895.2 2380.9,923.5 2384.8,853.9 2388.9,858.3 2392.8,835.4 2396.7,831.1 2400.9,895.2 2404.8,806.1 2408.7,758.3 2413.0,761.5 2416.7,725.7 2421.1,767.0 2424.8,782.2 2428.7,817.0" fill="none" stroke="#6687e8" stroke-width="3" stroke-linejoin="round"/></svg>
<div style="position:absolute;left:415px;top:1110px;width:2102px;height:200px;background:#fff;border-radius:16px 16px 0 0"></div>
<div class="t" style="left:484.70000000000005px;width:300px;text-align:center;top:1145.3px;font-size:20px;color:#1f1f1f;letter-spacing:0px;font-weight:400;transform:scaleX(0.8602);">QUERIES</div>
<div class="t" style="left:787.9px;width:300px;text-align:center;top:1145.3px;font-size:20px;color:#757575;letter-spacing:0px;font-weight:400;transform:scaleX(0.8797);">PAGES</div>
<div class="t" style="left:1103.2px;width:300px;text-align:center;top:1145.3px;font-size:20px;color:#757575;letter-spacing:0px;font-weight:400;transform:scaleX(0.8884);">COUNTRIES</div>
<div class="t" style="left:1427.8px;width:300px;text-align:center;top:1145.3px;font-size:20px;color:#757575;letter-spacing:0px;font-weight:400;transform:scaleX(0.8647);">DEVICES</div>
<div class="t" style="left:1802.0px;width:300px;text-align:center;top:1145.3px;font-size:20px;color:#757575;letter-spacing:0px;font-weight:400;transform:scaleX(0.9193);">SEARCH APPEARANCE</div>
<div class="t" style="left:2162.6px;width:300px;text-align:center;top:1145.3px;font-size:20px;color:#757575;letter-spacing:0px;font-weight:400;transform:scaleX(0.8838);">DAYS</div>
<div style="position:absolute;left:415px;top:1202px;width:2102px;height:1.5px;background:#e6e6e6"></div>
<div style="position:absolute;left:479px;top:1198px;width:311px;height:3.5px;background:#3c3c3c"></div>
<div style="position:absolute;left:415px;top:1274.5px;width:2102px;height:1.5px;background:#e6e6e6"></div>
<svg style="position:absolute;left:2452px;top:1225px;" width="26" height="18" viewBox="0 0 26 18"><rect x="0" y="0" width="25.5" height="3" fill="#444746"/><rect x="4" y="7" width="17.5" height="3" fill="#444746"/><rect x="10" y="14" width="5.5" height="3" fill="#444746"/></svg>
<div style="position:absolute;left:2534px;top:339px;width:26px;height:949px;background:#fafafa"></div>
<svg style="position:absolute;left:2540px;top:347px;" width="15" height="13" viewBox="0 0 15 13"><path d="M7.5 0.5L15 12H0z" fill="#8a8a8a"/></svg>
<div style="position:absolute;left:2539.8px;top:371px;width:15.5px;height:465.5px;background:#8a8a8a;border-radius:8px"></div>
<svg style="position:absolute;left:2540px;top:1275px;" width="15" height="13" viewBox="0 0 15 13"><path d="M0 0h15L7.5 11.5z" fill="#8a8a8a"/></svg>
</body></html>
